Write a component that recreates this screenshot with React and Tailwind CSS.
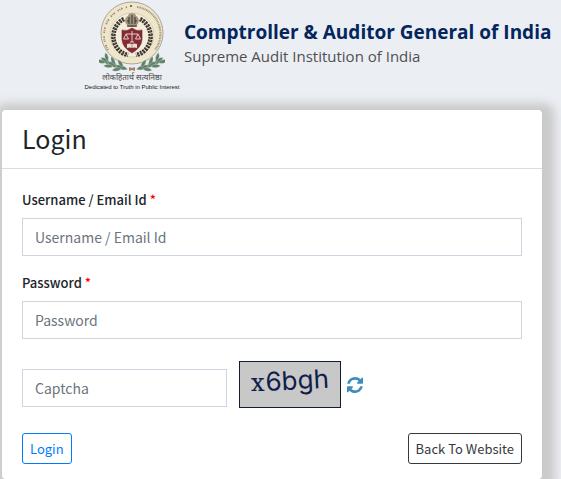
import React from "react";

const field =
  "block h-[38px] w-full border border-[#d1d3e0] bg-white px-3 text-[14px] text-[#495057] placeholder:text-[#6c757d] placeholder:opacity-100 outline-none";
const label = "mb-[9px] block text-[13px] leading-[19px] font-medium text-[#212529]";
const leaves = [
  [5, 59, 35],
  [12, 63, 25],
  [20, 66, 15],
];

function Branch() {
  return (
    <g>
      {leaves.map(([x, y, angle]) => (
        <g key={x} transform={`translate(${x} ${y}) rotate(${angle})`}>
          <path d="M-4 0q5-5 13 0-6 4-13 0z" />
          <path d="M3 1q-3 5-9 4 2-5 9-4z" />
          <path d="M4-1q-1-5-7-6 1 6 7 6z" />
        </g>
      ))}
    </g>
  );
}

function Emblem() {
  return (
    <svg viewBox="0 0 66 71" className="h-[71px] w-[66px]" role="img" aria-label="Emblem">
      <circle cx="33" cy="32" r="31" fill="#eee5ca" stroke="#9c9484" strokeWidth="0.8" />
      <path d="M9 49A29 29 0 0 1 28 6" fill="none" stroke="#8d8573" strokeWidth="1.8" strokeDasharray="1.2 1 0.8 1 1.4 3.5" />
      <path d="M38 6A27 27 0 0 1 56 49" fill="none" stroke="#9a917e" strokeWidth="2" strokeDasharray="0.9 0.7" />
      <circle cx="32" cy="5" r="1" fill="#5c4538" />
      <circle cx="33" cy="34" r="22" fill="#f4eddb" stroke="#cfc4a9" strokeWidth="0.7" />
      <path d="M25 18A18 19 0 0 0 29 54M41 18A18 19 0 0 1 37 54" fill="none" stroke="#38322b" strokeWidth="4.500" strokeDasharray="2.2 0.9" />
      <path d="M25 18A18 19 0 0 0 29 54M41 18A18 19 0 0 1 37 54" fill="none" stroke="#c5b899" strokeWidth="1" strokeDasharray="1 2.1" />
      <path d="M28 24c-3-3-2-8 1-9 0-2 2-3 4-3s4 1 4 3c3 1 4 6 1 9l-1 2h-8z" fill="#a0947f" />
      <path d="M30 16v7m3-9v9m3-7v7M28 20h2m6 0h2M28 25h10" stroke="#37302a" strokeWidth="1" />
      <path d="M23 29q5 2 10-2 5 4 10 2v10q-1 8-10 13-9-5-10-13z" fill="#842b36" stroke="#672631" strokeWidth="0.6" />
      <path d="M33 30v11M27 33h12M27 33l-2.500 5h5zM39 33l-2.500 5h5zM31 41h4" fill="none" stroke="#efdace" strokeWidth="0.9" />
      <path d="M28 43q3-1 5 0 2-1 5 0v4q-3-1-5 0-2-1-5 0z" fill="#e8ded3" />
      <path d="M33 43v4" stroke="#842b36" strokeWidth="0.5" />
      <g fill="#5f806a" stroke="#dbe5d8" strokeWidth="0.3">
        <Branch />
        <g transform="translate(66 0) scale(-1 1)">
          <Branch />
        </g>
      </g>
      <path d="m30 66 3 1 3-1v4l-3-1-3 1z" fill="#a6835b" />
    </svg>
  );
}

function Captcha() {
  return (
    <svg viewBox="0 0 102 47" className="h-[47px] w-[102px] shrink-0" role="img" aria-label="Captcha code">
      <rect x="0.5" y="0.5" width="101" height="46" fill="#c8c8c8" stroke="#101d36" />
      <g fill="#101d4b" stroke="#101d4b">
        <text x="12" y="30" fontSize="24" strokeWidth="0.2" fontFamily="DejaVu Serif, serif">x</text>
        <text x="27" y="30" fontSize="26" strokeWidth="0" fontFamily="Inter, sans-serif" transform="rotate(-3 27 30)">6bgh</text>
      </g>
    </svg>
  );
}

export default function App() {
  return (
    <div className="overflow-hidden bg-[#ebeef3] pr-[19px] pl-[2px] font-['Noto_Sans_CJK_SC',sans-serif]">
      <header className="-mr-[19px] flex h-[110px] items-start pl-[80px]">
        <div className="flex w-[100px] shrink-0 flex-col items-center pt-px whitespace-nowrap">
          <Emblem />
          <span className="text-[8px] leading-[10px] text-[#444] font-['Noto_Sans',sans-serif]">लोकहितार्थ सत्यनिष्ठा</span>
          <span className="text-[6px] leading-[10px] text-[#222] font-['Liberation_Sans',sans-serif]">Dedicated to Truth in Public Interest</span>
        </div>
        <div className="pt-[18px] pl-[2px] whitespace-nowrap font-['Open_Sans',sans-serif]">
          <h1 className="text-[19px] leading-7 font-bold text-[#03265d]">Comptroller &amp; Auditor General of India</h1>
          <p className="text-[15px] leading-5 text-[#505050]">Supreme Audit Institution of India</p>
        </div>
      </header>

      <main className="rounded bg-white shadow-[3px_3px_10px_10px_#cacaca]">
        <h2 className="border-b border-[#dcdcdc] px-5 pt-2 pb-[10px] text-[25px] leading-10 text-[#212529]">Login</h2>
        <form className="px-5 pt-[21px] pb-[15px]" onSubmit={(e) => e.preventDefault()}>
          <label htmlFor="username" className={label}>
            Username / Email Id <span className="text-[#f00]">*</span>
          </label>
          <input id="username" className={field} placeholder="Username / Email Id" />
          <label htmlFor="password" className={`${label} mt-[17px]`}>
            Password <span className="text-[#f00]">*</span>
          </label>
          <input id="password" type="password" className={field} placeholder="Password" />
          <div className="mt-[22px] flex items-center">
            <div className="w-[41%] pt-[6px]">
              <input id="captcha" aria-label="Captcha" className={field} placeholder="Captcha" />
            </div>
            <div className="ml-3 flex items-center gap-[6px]">
              <Captcha />
              <button type="button" aria-label="Refresh captcha" className="text-[#3c8dbc]">
                <svg viewBox="0 0 1536 1536" className="h-4 w-4" fill="currentColor">
                  <path d="M1511 928q0 5-1 7-64 268-268 434.500T764 1536q-146 0-282.500-55T238 1324l-129 129q-19 19-45 19t-45-19-19-45V960q0-26 19-45t45-19h448q26 0 45 19t19 45-19 45l-137 137q71 66 161 102t187 36q134 0 250-65t186-179q11-17 53-117 8-23 30-23h192q13 0 22.500 9.500t9.500 22.500zm25-800v448q0 26-19 45t-45 19h-448q-26 0-45-19t-19-45 19-45l138-138Q969 256 768 256q-134 0-250 65T332 500q-11 17-53 117-8 23-30 23H50q-13 0-22.500-9.500T18 608v-7q65-268 270-434.500T768 0q146 0 284 55.500T1297 212l130-129q19-19 45-19t45 19 19 45z" />
                </svg>
              </button>
            </div>
          </div>
          <div className="mt-[25px] flex items-center justify-between">
            <button className="h-[31px] rounded-[3px] border border-[#007bff] px-[7px] text-[13px] leading-5 text-[#007bff]">Login</button>
            <button type="button" className="h-[31px] rounded-[3px] border border-[#343a40] px-[7px] text-[13px] leading-5 text-[#343a40]">Back To Website</button>
          </div>
        </form>
      </main>
    </div>
  );
}
